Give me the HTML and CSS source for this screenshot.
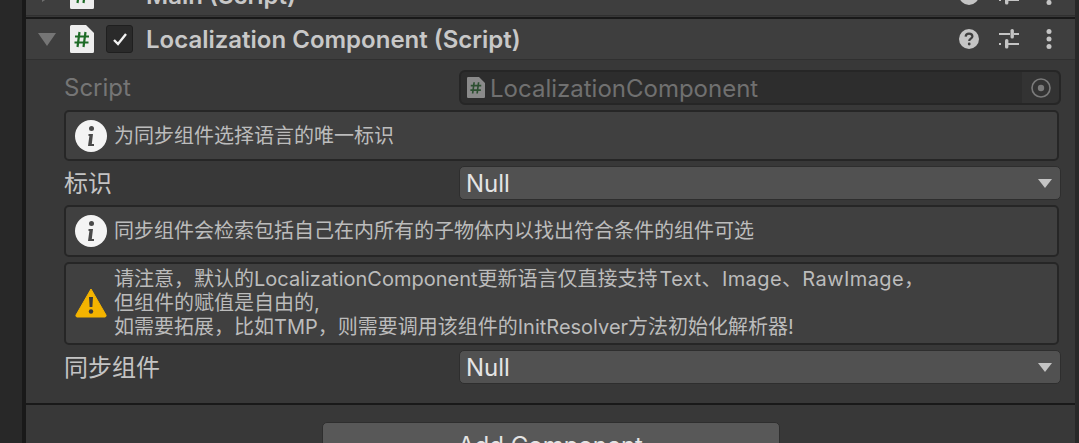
FILE: index.html
```html
<!DOCTYPE html>
<html lang="zh-CN">
  <head>
    <meta charset="UTF-8" />
    <meta name="viewport" content="width=device-width, initial-scale=1.0" />
    <title>Localization Component</title>
    <link rel="stylesheet" href="styles.css">
  </head>
  <body>
    <div class="inspector">
      <!-- previous component, cut off by the top of the window -->
      <div class="stub">
        <div class="header header-clipped">
          <svg class="fold" viewBox="0 0 18 18"><path d="M4 2 L15 9 L4 16 Z" fill="#6f6f6f" /></svg>
          <svg class="script-icon" viewBox="0 0 24 28">
            <path d="M0 1.5 A1.5 1.5 0 0 1 1.5 0 H16 L24 8 V26.5 A1.5 1.5 0 0 1 22.5 28 H1.5 A1.5 1.5 0 0 1 0 26.5 Z" fill="#eeeeee" />
            <path d="M9.5 7 L7.5 22 M15.5 7 L13.5 22 M5 11.5 H19 M4.5 17.5 H18.5" stroke="#1d6b26" stroke-width="2.2" fill="none" />
          </svg>
          <span class="check-space"></span>
          <span class="title">Main (Script)</span>
          <div class="header-tools">
            <svg class="tool" viewBox="0 0 20 20"><circle cx="10" cy="10" r="10" fill="#c4c4c4" /></svg>
            <svg class="tool" viewBox="0 0 20 20">
              <path d="M0 5 H11 M15 5 H20 M0 15 H2 M9 15 H20" stroke="#c4c4c4" stroke-width="2" fill="none" />
              <rect x="6" y="10" width="3.4" height="9.5" rx="1.6" fill="#c4c4c4" />
            </svg>
            <svg class="tool" viewBox="0 0 20 20"><circle cx="10" cy="17.4" r="2.5" fill="#c4c4c4" /></svg>
          </div>
        </div>
      </div>

      <div class="header">
        <svg class="fold" viewBox="0 0 18 18"><path d="M0 3 H18 L9 16 Z" fill="#757575" /></svg>
        <svg class="script-icon" viewBox="0 0 24 28">
          <path d="M0 1.5 A1.5 1.5 0 0 1 1.5 0 H16 L24 8 V26.5 A1.5 1.5 0 0 1 22.5 28 H1.5 A1.5 1.5 0 0 1 0 26.5 Z" fill="#eeeeee" />
          <path d="M9.5 7 L7.5 22 M15.5 7 L13.5 22 M5 11.5 H19 M4.5 17.5 H18.5" stroke="#1d6b26" stroke-width="2.2" fill="none" />
        </svg>
        <span class="checkbox">
          <svg viewBox="0 0 16 14"><path d="M2 8 L6 12 L14 2" stroke="#f2f2f2" stroke-width="2.4" fill="none" /></svg>
        </span>
        <span class="title">Localization Component (Script)</span>
        <div class="header-tools">
          <svg class="tool" viewBox="0 0 20 20">
            <circle cx="10" cy="10" r="10" fill="#c4c4c4" />
            <path d="M6.6 7.6 C6.8 5.5 8.2 4.6 10 4.6 C12 4.6 13.4 5.8 13.4 7.4 C13.4 9.6 10.2 9.7 10.2 12" stroke="#3e3e3e" stroke-width="2.2" fill="none" />
            <circle cx="10.2" cy="15" r="1.4" fill="#3e3e3e" />
          </svg>
          <svg class="tool" viewBox="0 0 20 20">
            <path d="M0 5 H11 M15 5 H20 M0 15 H2 M9 15 H20" stroke="#c4c4c4" stroke-width="2" fill="none" />
            <rect x="11.5" y="0" width="3.4" height="9.5" rx="1.6" fill="#c4c4c4" />
            <rect x="6" y="10" width="3.4" height="9.5" rx="1.6" fill="#c4c4c4" />
          </svg>
          <svg class="tool" viewBox="0 0 20 20">
            <circle cx="10" cy="2.6" r="2.5" fill="#c4c4c4" />
            <circle cx="10" cy="10" r="2.5" fill="#c4c4c4" />
            <circle cx="10" cy="17.4" r="2.5" fill="#c4c4c4" />
          </svg>
        </div>
      </div>

      <div class="body">
        <div class="row row-script">
          <label class="row-label muted">Script</label>
          <div class="object-field">
            <svg class="field-icon" viewBox="0 0 24 28">
              <path d="M0 1.5 A1.5 1.5 0 0 1 1.5 0 H16 L24 8 V26.5 A1.5 1.5 0 0 1 22.5 28 H1.5 A1.5 1.5 0 0 1 0 26.5 Z" fill="#8a8a8a" />
              <path d="M9.5 7 L7.5 22 M15.5 7 L13.5 22 M5 11.5 H19 M4.5 17.5 H18.5" stroke="#2c4f30" stroke-width="2.2" fill="none" />
            </svg>
            <span class="field-text">LocalizationComponent</span>
            <span class="picker">
              <svg viewBox="0 0 20 20">
                <circle cx="10" cy="10" r="9" stroke="#7a7a7a" stroke-width="1.6" fill="none" />
                <circle cx="10" cy="10" r="3.2" fill="#7a7a7a" />
              </svg>
            </span>
          </div>
        </div>

        <div class="help-box help-one">
          <svg class="help-icon" viewBox="0 0 32 32">
            <circle cx="16" cy="16" r="16" fill="#f4f4f4" />
            <circle cx="16.5" cy="8.5" r="2.5" fill="#4a4a4a" />
            <path d="M13.5 14 H18 L16.8 24 H19 V26 H13 L14.4 16 H13.5 Z" fill="#4a4a4a" />
          </svg>
          <p class="help-text">为同步组件选择语言的唯一标识</p>
        </div>

        <div class="row">
          <label class="row-label cjk-label">标识</label>
          <div class="dropdown"><span>Null</span><i class="caret"></i></div>
        </div>

        <div class="help-box help-two">
          <svg class="help-icon" viewBox="0 0 32 32">
            <circle cx="16" cy="16" r="16" fill="#f4f4f4" />
            <circle cx="16.5" cy="8.5" r="2.5" fill="#4a4a4a" />
            <path d="M13.5 14 H18 L16.8 24 H19 V26 H13 L14.4 16 H13.5 Z" fill="#4a4a4a" />
          </svg>
          <p class="help-text">同步组件会检索包括自己在内所有的子物体内以找出符合条件的组件可选</p>
        </div>

        <div class="help-box help-three">
          <svg class="help-icon" viewBox="0 0 32 30">
            <path d="M16 1 L31 27 A1.5 1.5 0 0 1 30 29 H2 A1.5 1.5 0 0 1 1 27 Z" fill="#f4b400" stroke="#f4b400" stroke-linejoin="round" />
            <path d="M14 9 H18 L17.4 19 H14.6 Z" fill="#3a3a3a" />
            <circle cx="16" cy="23.5" r="2.2" fill="#3a3a3a" />
          </svg>
          <p class="help-text">请注意，默认的LocalizationComponent更新语言仅直接支持<span class="wide">Text、Image、RawImage，</span><br />但组件的赋值是自由的,<br />如需要拓展，比如TMP，则需要调用该组件的InitResolver方法初始化解析器!</p>
        </div>

        <div class="row">
          <label class="row-label cjk-label">同步组件</label>
          <div class="dropdown"><span>Null</span><i class="caret"></i></div>
        </div>
      </div>

      <div class="footer">
        <button class="add-button">Add Component</button>
      </div>
    </div>
  </body>
</html>
```

FILE: styles.css
```css
html, body {
  margin: 0;
  height: 443px;
  overflow: hidden;
  background-color: #282828;
}

body {
  font-family: Inter, "Noto Sans CJK SC", sans-serif;
  color: #c4c4c4;
}

.inspector {
  margin-left: 22px;
  margin-right: 4px;
  height: 443px;
  overflow: hidden;
  background-color: #383838;
  border-left: 4px solid #191919;
}

/* headers */
.stub {
  height: 17px;
  overflow: hidden;
  border-bottom: 2px solid #191919;
}

.header-clipped {
  margin-top: -25px;
}

.header {
  display: flex;
  align-items: center;
  height: 40px;
  padding: 0 16px 0 12px;
  background-color: #3e3e3e;
  border-bottom: 1px solid #303030;
}

.fold {
  width: 18px;
  height: 18px;
  margin-right: 14px;
}

.script-icon {
  width: 24px;
  height: 28px;
  margin-right: 12px;
}

.checkbox {
  display: flex;
  align-items: center;
  justify-content: center;
  width: 27px;
  height: 28px;
  margin-right: 13px;
  box-sizing: border-box;
  background-color: #2a2a2a;
  border: 1px solid #1f1f1f;
  border-radius: 3px;
}

.checkbox svg {
  width: 16px;
  height: 14px;
}

.check-space {
  width: 27px;
  margin-right: 13px;
}

.title {
  font-size: 24px;
  font-weight: 600;
  color: #c8c8c8;
}

.header-tools {
  display: flex;
  gap: 20px;
  margin-left: auto;
}

.tool {
  width: 20px;
  height: 20px;
}

/* inspector body */
.body {
  display: flex;
  flex-direction: column;
  height: 345px;
  padding: 10px 16px 0 38px;
  box-sizing: border-box;
  border-bottom: 2px solid #191919;
}

.row {
  display: flex;
  align-items: center;
  height: 34px;
  margin-bottom: 5px;
}

.row-script {
  height: 35px;
}

.row-label {
  width: 395px;
  font-size: 24px;
  color: #c4c4c4;
}

.cjk-label {
  padding-bottom: 4px;
}

.muted {
  color: #757575;
}

.object-field {
  display: flex;
  align-items: center;
  flex: 1;
  height: 35px;
  margin-right: -2px;
  box-sizing: border-box;
  padding-left: 6px;
  background-color: #2d2d2d;
  border: 2px solid #262626;
  border-radius: 6px;
}

.field-icon {
  width: 18px;
  height: 21px;
  margin-right: 5px;
}

.field-text {
  padding-top: 2px;
  font-size: 24px;
  color: #707070;
}

.picker {
  display: flex;
  align-items: center;
  justify-content: center;
  width: 37px;
  height: 100%;
  margin-left: auto;
  background-color: #333333;
  border-radius: 0 5px 5px 0;
}

.picker svg {
  width: 20px;
  height: 20px;
}

.dropdown {
  display: flex;
  align-items: center;
  justify-content: space-between;
  flex: 1;
  height: 34px;
  margin-right: -2px;
  padding: 0 7px 0 6px;
  box-sizing: border-box;
  font-size: 24px;
  color: #e4e4e4;
  background-color: #515151;
  border: 1px solid #2e2e2e;
  border-radius: 5px;
}

.caret {
  width: 0;
  height: 0;
  margin-right: 1px;
  border-left: 7px solid transparent;
  border-right: 7px solid transparent;
  border-top: 9px solid #c4c4c4;
}

/* help boxes */
.help-box {
  display: flex;
  align-items: center;
  margin-bottom: 5px;
  padding: 0 9px;
  box-sizing: border-box;
  background-color: #404040;
  border: 2px solid #262626;
  border-radius: 5px;
}

.help-one {
  height: 51px;
}

.help-two {
  height: 52px;
}

.help-three {
  height: 83px;
  padding-bottom: 2px;
}

.help-icon {
  flex: none;
  width: 32px;
  height: 32px;
  margin-right: 7px;
}

.help-text {
  margin: 0;
  font-size: 20px;
  line-height: 24px;
  color: #bcbcbc;
}

.wide {
  margin-left: 2px;
  letter-spacing: 0.4px;
}

/* add component */
.footer {
  display: flex;
  justify-content: center;
  padding-top: 17px;
}

.add-button {
  width: 458px;
  height: 42px;
  padding-top: 6px;
  font-family: inherit;
  font-size: 24px;
  color: #e4e4e4;
  background-color: #585858;
  border: 1px solid #2e2e2e;
  border-radius: 5px;
}
```
